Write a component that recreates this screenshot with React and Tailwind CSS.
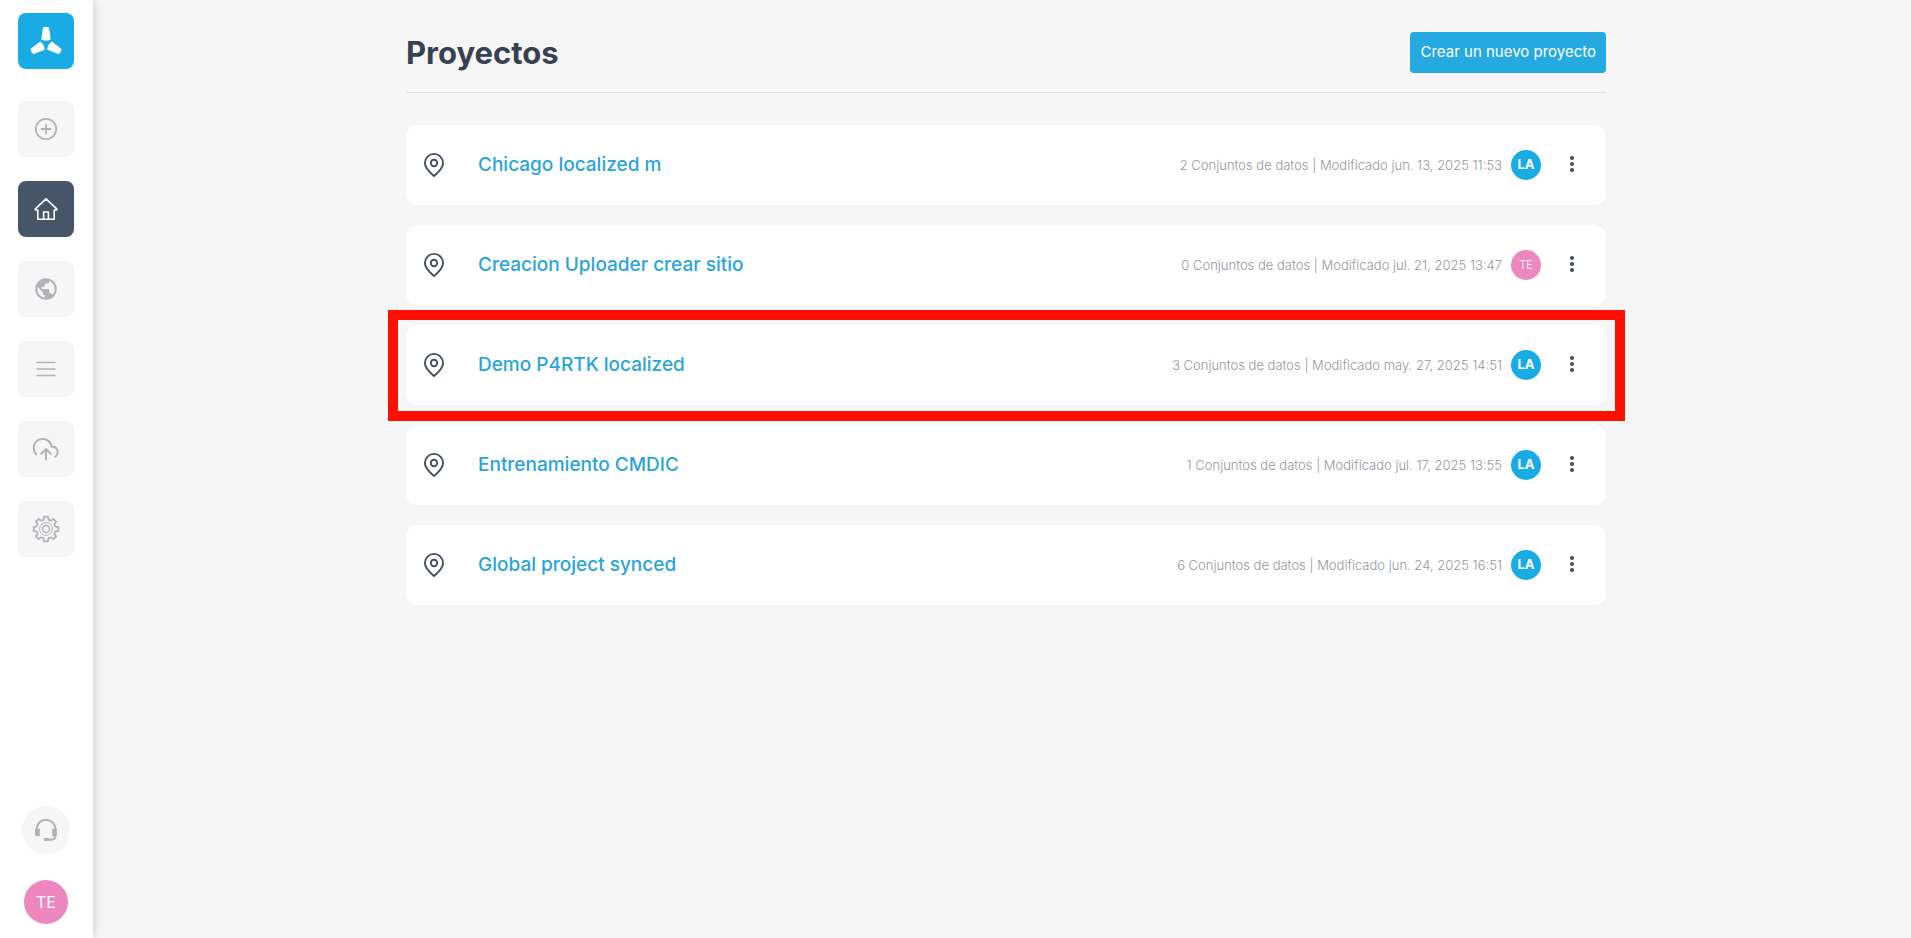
import { MdPublic } from 'react-icons/md';

const navItems = [
  { id: 'new', label: 'Nuevo', Icon: PlusCircleIcon },
  { id: 'home', label: 'Proyectos', Icon: HomeIcon, active: true },
  { id: 'sites', label: 'Sitios', Icon: GlobeIcon },
  { id: 'list', label: 'Lista', Icon: MenuIcon },
  { id: 'upload', label: 'Subir', Icon: CloudUploadIcon },
  { id: 'settings', label: 'Ajustes', Icon: GearIcon },
];

const projects = [
  { id: 1, name: 'Chicago localized m', datasets: 2, modified: 'jun. 13, 2025 11:53', owner: 'LA' },
  { id: 2, name: 'Creacion Uploader crear sitio', datasets: 0, modified: 'jul. 21, 2025 13:47', owner: 'TE' },
  { id: 3, name: 'Demo P4RTK localized', datasets: 3, modified: 'may. 27, 2025 14:51', owner: 'LA', highlighted: true },
  { id: 4, name: 'Entrenamiento CMDIC', datasets: 1, modified: 'jul. 17, 2025 13:55', owner: 'LA' },
  { id: 5, name: 'Global project synced', datasets: 6, modified: 'jun. 24, 2025 16:51', owner: 'LA' },
];

function LogoIcon() {
  const blade = 'M-2.4 -15.8 Q0 -16.6 2.4 -15.8 L4 -4.4 Q0 -2.8 -4 -4.4 Z';
  return (
    <svg width="36" height="36" viewBox="-18 -20.5 36 36" fill="#fff" stroke="#fff" strokeWidth="1.2" strokeLinejoin="round" aria-hidden="true">
      <path d={blade} />
      <path d={blade} transform="rotate(120)" />
      <path d={blade} transform="rotate(240)" />
    </svg>
  );
}

function PlusCircleIcon() {
  return (
    <svg width="24" height="24" viewBox="0 0 24 24" fill="none" stroke="currentColor" strokeWidth="1.8" strokeLinecap="round" aria-hidden="true">
      <circle cx="12" cy="12" r="10.2" />
      <path d="M12 7.5v9M7.5 12h9" />
    </svg>
  );
}

function HomeIcon() {
  return (
    <svg width="24" height="24" viewBox="0 0 24 24" fill="none" stroke="currentColor" strokeWidth="1.6" strokeLinejoin="round" aria-hidden="true">
      <path d="M12 1.8 1.3 11.8v1.2h2.5v9.2h16.4V13h2.5v-1.2z" />
      <path d="M9.6 22v-7h4.8v7" />
    </svg>
  );
}

function GlobeIcon() {
  return <MdPublic size={26} aria-hidden="true" />;
}

function MenuIcon() {
  return (
    <svg width="24" height="24" viewBox="0 0 24 24" fill="none" stroke="currentColor" strokeWidth="1.6" strokeLinecap="round" aria-hidden="true">
      <path d="M3 5.5h18M3 12h18M3 18.5h18" />
    </svg>
  );
}

function CloudUploadIcon() {
  return (
    <svg width="28" height="28" viewBox="0 0 28 28" fill="none" stroke="currentColor" strokeWidth="2" strokeLinecap="round" strokeLinejoin="round" aria-hidden="true">
      <path d="M4.2 19.2A9 9 0 1 1 19.6 11.6a5.6 5.6 0 0 1 3.6 10.2" />
      <path d="M14 24.4V14.6M9.2 18.8l4.8-4.8 4.8 4.8" />
    </svg>
  );
}

function GearIcon() {
  // one tooth with the valley that follows it, repeated every 45 degrees
  const tooth = 'M-3.6 -8.7 Q-2.3 -9 -2.2 -10.4 L-2 -12.3 H2 L2.2 -10.4 Q2.3 -9 3.6 -8.7';
  return (
    <svg width="28" height="28" viewBox="-14 -14 28 28" fill="none" stroke="currentColor" strokeWidth="1.8" strokeLinejoin="round" strokeLinecap="round" aria-hidden="true">
      {[0, 45, 90, 135, 180, 225, 270, 315].map((angle) => (
        <path key={angle} d={tooth} transform={`rotate(${angle})`} />
      ))}
      <circle r="6.4" strokeWidth="1" />
      <circle r="3.5" strokeWidth="1.4" />
    </svg>
  );
}

function HeadsetIcon() {
  return (
    <svg width="24" height="24" viewBox="0 0 24 24" fill="none" stroke="currentColor" strokeWidth="2.2" aria-hidden="true">
      <path d="M2.6 12v-.8a9.4 9.4 0 0 1 18.8 0V18a4 4 0 0 1-4 3.6H10" />
      <path d="M10 20h4.4v3H10z" fill="currentColor" stroke="none" />
      <path d="M1 10.8h4.8v7.4H3a2 2 0 0 1-2-2zM23 10.8h-4.8v7.4H21a2 2 0 0 0 2-2z" fill="currentColor" stroke="none" />
    </svg>
  );
}

function PinIcon() {
  return (
    <svg width="24" height="26" viewBox="0 0 24 26" fill="none" stroke="currentColor" strokeWidth="1.9" strokeLinejoin="round" aria-hidden="true">
      <path d="M12 24 C9.5 21.6 2.9 17 2.9 11 A9.1 9.1 0 0 1 21.1 11 C21.1 17 14.5 21.6 12 24 Z" />
      <circle cx="12" cy="11" r="3.2" />
    </svg>
  );
}

function DotsIcon() {
  return (
    <svg width="6" height="20" viewBox="0 0 6 20" fill="currentColor" aria-hidden="true">
      <circle cx="3" cy="3" r="2.1" />
      <circle cx="3" cy="9" r="2.1" />
      <circle cx="3" cy="15" r="2.1" />
    </svg>
  );
}

function Sidebar() {
  return (
    <aside className="z-10 flex w-[93px] shrink-0 flex-col items-center bg-white pt-[13px] pr-px pb-[14px] shadow-[0_0_10px_rgba(0,0,0,0.2)]">
      <a href="#" aria-label="Inicio" className="flex size-14 items-center justify-center rounded-lg bg-[#19ace4]">
        <LogoIcon />
      </a>

      <nav className="mt-8 flex flex-col gap-6">
        {navItems.map(({ id, label, Icon, active }) => (
          <button
            key={id}
            type="button"
            aria-label={label}
            className={`flex size-14 items-center justify-center rounded-lg ${active ? 'bg-[#475569] text-white' : 'bg-[#f6f6f6] text-[#b0b3b8]'}`}
          >
            <Icon />
          </button>
        ))}
      </nav>

      <div className="mt-auto flex flex-col items-center gap-[26px]">
        <button type="button" aria-label="Soporte" className="flex size-12 items-center justify-center rounded-full bg-[#f6f6f6] text-[#b0b3b8]">
          <HeadsetIcon />
        </button>
        <button type="button" className="flex size-11 items-center justify-center rounded-full bg-[#ec87c0] text-base text-white">
          TE
        </button>
      </div>
    </aside>
  );
}

function ProjectRow({ project }) {
  const { name, datasets, modified, owner, highlighted } = project;

  return (
    <li className="relative flex h-20 items-center rounded-xl bg-white pr-[31px] pl-4 text-[#475060]">
      <PinIcon />
      <a href="#" className="ml-8 text-[19px] leading-7 font-medium text-[#2aa5d9]">
        {name}
      </a>
      <span className="ml-auto text-[13px] leading-5 font-light text-[#94979c]">
        {datasets} Conjuntos de datos | Modificado {modified}
      </span>
      <span
        className={`ml-[9px] flex size-[30px] items-center justify-center rounded-full text-white ${owner === 'LA' ? 'bg-[#19ace4] text-[13px] font-bold' : 'bg-[#ec87c0] text-[11px] font-light'}`}
      >
        {owner}
      </span>
      <button type="button" aria-label={`Opciones de ${name}`} className="ml-7">
        <DotsIcon />
      </button>
      {highlighted && (
        <div className="pointer-events-none absolute -top-[15px] -right-[19px] -bottom-4 -left-[18px] z-10 border-[10px] border-[#ff1000]" />
      )}
    </li>
  );
}

export default function App() {
  return (
    <div className="flex min-h-screen bg-[#f6f6f6] font-['Inter',sans-serif]">
      <Sidebar />
      <main className="flex-1 pl-2">
        <div className="mx-auto max-w-[1200px]">
          <header className="flex items-center justify-between border-b border-[#dcdee1] pt-8 pb-[19px]">
            <h1 className="text-[31px] leading-10 font-bold text-[#374151]">Proyectos</h1>
            <button type="button" className="h-[41px] rounded bg-[#24a9e0] px-[10px] text-[15px] text-white">
              Crear un nuevo proyecto
            </button>
          </header>

          <ul className="mt-8 flex flex-col gap-5">
            {projects.map((project) => (
              <ProjectRow key={project.id} project={project} />
            ))}
          </ul>
        </div>
      </main>
    </div>
  );
}
